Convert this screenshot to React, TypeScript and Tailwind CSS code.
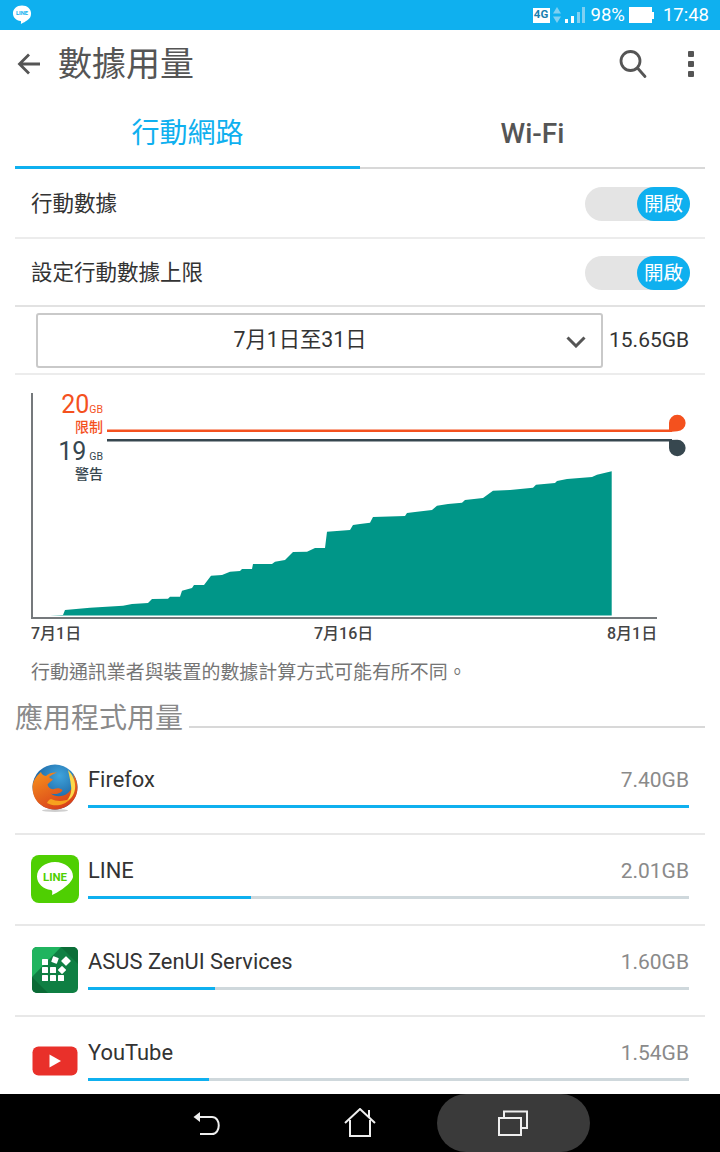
import React from "react";

const font = { fontFamily: '"Roboto","Noto Sans CJK TC",sans-serif' };
const AREA =
  "50,615.5 63,615 65,610 90,607.7 123,605.7 132,604 148,603 152,599 168,598.7 170,596.7 180,596.7 182,590.7 192,588 194,585 204,585 211,575.7 222,575 230,571.7 240,571 242,569 252,569 253,564 272,564 275,561.7 285,560 293,552 307,551.7 315,548 325,548 327,531.7 350,530 353,525 360,524 370,522.7 373,517 405,516 407,513 415,512 432,510 437,505.7 448,504 462,502.7 465,500 483,498 493,490.7 510,490 533,487.7 536,484.7 555,483 557,481 567,479 592,477 597,474.7 611.7,471.3 611.7,615.5";

function Toggle() {
  return (
    <div className="flex h-[34px] w-[105px] justify-end rounded-full bg-[#e4e4e4]">
      <div className="flex h-[34px] w-[53px] items-center justify-center rounded-full bg-[#0fb0ef] pt-[2px] text-[19.5px] leading-none text-white">開啟</div>
    </div>
  );
}

function Firefox() {
  return (
    <svg width="48" height="48" viewBox="1 0 48 48">
      <defs>
        <radialGradient id="g" cx="0.6" cy="0.25" r="0.6">
          <stop offset="0" stopColor="#3fa4dc" />
          <stop offset="1" stopColor="#1a5f9e" />
        </radialGradient>
        <linearGradient id="o" x1="0" y1="0" x2="0.6" y2="1">
          <stop offset="0" stopColor="#f7931e" />
          <stop offset="1" stopColor="#d8401a" />
        </linearGradient>
      </defs>
      <ellipse cx="25" cy="46.500" rx="13" ry="1.500" fill="#cfcfcf" />
      <circle cx="25" cy="23" r="22.500" fill="url(#g)" />
      <path d="M11 8C5 13 2.500 18 2.500 23.500C2.500 36 12 45.500 25 45.500C37 45.500 47.500 36 47.500 24C47.500 19 46 14 43 9.500C45 17 43 25 38 29C33 33 25 33.500 21 29.500C26 31 32 29 32.500 26C30 24 27 24 24 25C21 26 18 23 17.500 20.500C19 18 22 17 23 15.500C21.500 15 20 14 19 13C21 11 24 10 27 8.500C22 8 18 10 16 12C13 11.500 11.500 10 11 8Z" fill="url(#o)" />
      <path d="M38 6C43 11 46 18 45 25C44 31 41 35 36 38C40 33 42 28 41 22C40.500 16 39 11 38 6Z" fill="#fbd84a" />
      <path d="M17 39C24 43 34 42 40 35C35 37 27 38 21 35C19 35.500 18 37 17 39Z" fill="#f7a11e" />
    </svg>
  );
}

function LineIcon() {
  return (
    <svg width="48" height="48" viewBox="0 0 48 48">
      <rect width="48" height="48" rx="8" fill="#4fcf02" />
      <path d="M24 7C14 7 6 13.500 6 21.500C6 28.500 12 34 20 35C21.500 35.300 21.500 37 21 40C26 38 37 31 40 26C41 24.500 42 23 42 21.500C42 13.500 34 7 24 7Z" fill="#fff" />
      <text x="24" y="26" textAnchor="middle" fontSize="11.500" fontWeight="700" fill="#4fcf02" fontFamily="Roboto">LINE</text>
    </svg>
  );
}

function Asus() {
  const cells = [[10, 12], [10, 20], [18, 20], [10, 28], [18, 28], [26, 28]];
  return (
    <svg width="46" height="46" viewBox="0 0 46 46">
      <rect width="46" height="46" rx="5" fill="#0f7f43" />
      <path d="M0 5a5 5 0 0 1 5-5h24L0 30Z" fill="#20b45f" />
      <path d="M29 0h12a5 5 0 0 1 5 5v12L29 0Z" fill="#0b6e38" />
      <path d="M0 30l16 16H5a5 5 0 0 1-5-5Z" fill="#0a6a35" />
      {cells.map(([x, y], i) => (
        <rect key={i} x={x} y={y} width="6" height="6" rx="0.6" fill="#fff" />
      ))}
      <rect x="20" y="10" width="6" height="6" rx="0.6" fill="#fff" transform="rotate(20 23 13)" />
      <rect x="30.500" y="10.500" width="7" height="7" rx="0.6" fill="#fff" transform="rotate(45 34 14)" />
      <rect x="27" y="20" width="6" height="6" rx="0.6" fill="#fff" transform="rotate(45 30 23)" />
    </svg>
  );
}

function YouTube() {
  return (
    <svg width="46" height="30" viewBox="0 0 46 30">
      <rect x="0.500" y="0.500" width="45" height="29" rx="6" fill="#e9302a" />
      <path d="M17.500 8.500L29 15L17.500 21.500Z" fill="#fff" />
    </svg>
  );
}

const apps: { name: string; value: string; width: number; icon: React.ReactNode }[] = [
  { name: "Firefox", value: "7.40GB", width: 601, icon: <Firefox /> },
  { name: "LINE", value: "2.01GB", width: 163, icon: <LineIcon /> },
  { name: "ASUS ZenUI Services", value: "1.60GB", width: 127, icon: <Asus /> },
  { name: "YouTube", value: "1.54GB", width: 121, icon: <YouTube /> },
];

export default function App() {
  return (
    <div className="flex h-[1152px] w-[720px] flex-col overflow-hidden bg-white" style={font}>
      {/* status bar */}
      <div className="flex h-[30px] shrink-0 items-center justify-between bg-[#0fb0ef] pl-[12px] pr-[11px] text-white">
        <svg width="20" height="24" viewBox="0 0 21 24">
          <path d="M10.500 2C5 2 1 5.600 1 10.200C1 14.600 4.500 17.800 9 18.300C9.800 18.500 9.500 20 9.300 21.500C12 20.300 17 17.500 19 14.700C19.700 13.500 20 11.500 20 10.200C20 5.600 16 2 10.500 2Z" fill="#fff" />
          <text x="10.500" y="12.500" textAnchor="middle" fontSize="6" fontWeight="700" fill="#0fb0ef" fontFamily="Roboto">LINE</text>
        </svg>
        <div className="flex items-center">
          <div className="flex h-[15px] w-[17px] items-center justify-center bg-white text-[11.5px] font-bold leading-none text-[#1a7fb0]">4G</div>
          <svg width="8" height="16" viewBox="0 0 8 16" className="ml-[3px]">
            <path d="M4 0L8 6.500H0Z" fill="#7fd0f2" />
            <path d="M4 16L8 9.500H0Z" fill="#7fd0f2" />
          </svg>
          <svg width="20" height="16" viewBox="0 0 20 16" className="ml-[4px]">
            <rect x="0" y="12" width="3" height="4" fill="#fff" />
            <rect x="6" y="9" width="3" height="7" fill="#fff" />
            <rect x="12" y="5" width="3" height="11" fill="#7fd0f2" />
            <rect x="17" y="0" width="3" height="16" fill="#7fd0f2" />
          </svg>
          <span className="ml-[6px] text-[18.5px] leading-none">98%</span>
          <div className="ml-[4px] flex items-center">
            <div className="h-[16px] w-[23px] bg-white" />
            <div className="h-[7px] w-[2px] bg-white" />
          </div>
          <span className="ml-[9px] text-[18.5px] leading-none">17:48</span>
        </div>
      </div>

      {/* action bar */}
      <div className="flex h-[68px] shrink-0 items-center pl-[17px] pr-[26px]">
        <svg width="24" height="24" viewBox="0 0 24 24" fill="none" stroke="#555" strokeWidth="2.800">
          <path d="M23 12H2.500M12 2.500L2.500 12L12 21.500" />
        </svg>
        <span className="ml-[17px] flex-1 text-[34px] leading-none text-[#555]">數據用量</span>
        <svg width="28" height="30" viewBox="0 0 28 30" fill="none" stroke="#555" strokeWidth="2.800" strokeLinecap="round" className="mr-[41px]">
          <circle cx="11.500" cy="12" r="9.500" />
          <path d="M18.500 19L26 27.500" />
        </svg>
        <div className="flex flex-col gap-[4px]">
          <div className="h-[6px] w-[6px] rounded-[1px] bg-[#555]" />
          <div className="h-[6px] w-[6px] rounded-[1px] bg-[#555]" />
          <div className="h-[6px] w-[6px] rounded-[1px] bg-[#555]" />
        </div>
      </div>

      {/* body */}
      <div className="min-h-0 flex-1 overflow-hidden px-[15px]">
        {/* tabs */}
        <div className="flex h-[71px] border-b-2 border-[#d8d8d8]">
          <div className="-mb-[2px] flex w-[345px] items-center justify-center border-b-[3px] border-[#0fb0ef] pt-[4px] text-[28px] leading-none text-[#0fb0ef]">行動網路</div>
          <div className="flex flex-1 items-center justify-center pt-[2px] text-[28px] font-medium leading-none text-[#555]">Wi-Fi</div>
        </div>

        <div className="flex h-[70px] items-center justify-between border-b-2 border-[#ececec] pl-[16px] pr-[15px] pt-[2px]">
          <span className="text-[21.500px] leading-none text-[#333]">行動數據</span>
          <Toggle />
        </div>
        <div className="flex h-[68px] items-center justify-between border-b-2 border-[#e2e2e2] pl-[16px] pr-[15px] pt-[2px]">
          <span className="text-[21.500px] leading-none text-[#333]">設定行動數據上限</span>
          <Toggle />
        </div>
        <div className="flex h-[68px] items-center border-b-2 border-[#ececec] pl-[21px] pr-[16px]">
          <div className="relative flex h-[55px] w-[567px] shrink-0 items-center justify-center rounded-[3px] border-2 border-[#c9c9c9] pr-[39px] text-[21.300px] leading-none text-[#333]">
            7月1日至31日
            <svg width="20" height="12" viewBox="0 0 20 12" fill="none" stroke="#555" strokeWidth="3" className="absolute right-[15px] top-[21px]">
              <path d="M1.500 1.500L10 10L18.500 1.500" />
            </svg>
          </div>
          <span className="ml-[6px] text-[21px] leading-none text-[#333]">15.65GB</span>
        </div>

        {/* chart: a free canvas for the axis, limit lines and area */}
        <div className="relative -mx-[15px] h-[268px] text-[#333]">
          <svg width="720" height="268" viewBox="0 375 720 268" className="absolute left-0 top-0">
            <polygon points={AREA} fill="#009688" />
            <path d="M32 393V618H657" fill="none" stroke="#75797c" strokeWidth="2" />
            <path d="M107 430.800H672" stroke="#f4511e" strokeWidth="2.500" />
            <path d="M107 440.300H672" stroke="#37474f" strokeWidth="2.500" />
            <path d="M669 432V423a8.300 8.300 0 1 1 8.300 8.300Z" fill="#f4511e" />
            <path d="M669 440V448a8.300 8.300 0 1 0 8.300-8.300Z" fill="#37474f" />
          </svg>
          <div className="absolute right-[617px] top-[16px] flex items-baseline text-[#f4511e]">
            <span className="text-[25px] leading-[27px]">20</span>
            <span className="text-[10.500px] leading-none">GB</span>
          </div>
          <div className="absolute right-[617px] top-[45px] text-[14px] font-medium leading-none text-[#f4511e]">限制</div>
          <div className="absolute right-[617px] top-[63px] flex items-baseline text-[#37474f]">
            <span className="mr-[3px] text-[25px] leading-[27px]">19</span>
            <span className="text-[10.500px] leading-none">GB</span>
          </div>
          <div className="absolute right-[617px] top-[92px] text-[14px] font-medium leading-none text-[#37474f]">警告</div>
          <div className="absolute left-[31px] top-[251px] text-[16px] font-medium leading-none text-[#444]">7月1日</div>
          <div className="absolute left-[314px] top-[251px] text-[16px] font-medium leading-none text-[#444]">7月16日</div>
          <div className="absolute left-[607px] top-[251px] text-[16px] font-medium leading-none text-[#444]">8月1日</div>
        </div>

        <div className="pl-[16px] pt-[16px] text-[18.950px] leading-[28px] text-[#757575]">行動通訊業者與裝置的數據計算方式可能有所不同。</div>

        <div className="mb-[4px] mt-[11px] flex h-[42px] items-center">
          <span className="text-[28px] leading-none text-[#8a8a8a]">應用程式用量</span>
          <div className="ml-[6px] mt-[16px] h-[2px] flex-1 bg-[#d8d8d8]" />
        </div>

        {apps.map((a, i) => (
          <div key={a.name} className={"flex h-[91px] items-center border-b-2 pl-[16px] pr-[16px] " + (i < 3 ? "border-[#e8e8e8]" : "border-transparent")}>
            <div className="mb-[2px] flex w-[48px] shrink-0 items-center justify-center">{a.icon}</div>
            <div className="ml-[9px] flex-1">
              <div className="flex items-baseline justify-between leading-none">
                <span className="text-[21.900px] leading-none text-[#333]">{a.name}</span>
                <span className="text-[21px] leading-none text-[#8a8a8a]">{a.value}</span>
              </div>
              <div className="mt-[14px] h-[3px] bg-[#cfd8dc]">
                <div className="h-full bg-[#0fb0ef]" style={{ width: a.width }} />
              </div>
            </div>
          </div>
        ))}
      </div>

      {/* navigation bar */}
      <div className="flex h-[58px] shrink-0 justify-center bg-black">
        <div className="flex w-[153px] items-center justify-center">
          <svg width="30" height="28" viewBox="0 0 30 28" fill="none" stroke="#eee" strokeWidth="2">
            <path d="M6 8H20C29 8 29 25 20 25H8" />
            <path d="M1.500 8L8 3V13Z" fill="#eee" stroke="none" />
          </svg>
        </div>
        <div className="flex w-[153px] items-center justify-center">
          <svg width="32" height="30" viewBox="0 0 32 30" fill="none" stroke="#eee" strokeWidth="2">
            <path d="M1 15L16 1L31 15M25 9V2M6 12V28H26V12" />
          </svg>
        </div>
        <div className="flex w-[153px] items-center justify-center rounded-full bg-[#3a3a3a]">
          <svg width="32" height="28" viewBox="0 0 32 28" fill="none" stroke="#eee" strokeWidth="2">
            <rect x="2" y="9" width="22" height="17" />
            <path d="M7 8V2.500H30V19H25" />
          </svg>
        </div>
      </div>
    </div>
  );
}
